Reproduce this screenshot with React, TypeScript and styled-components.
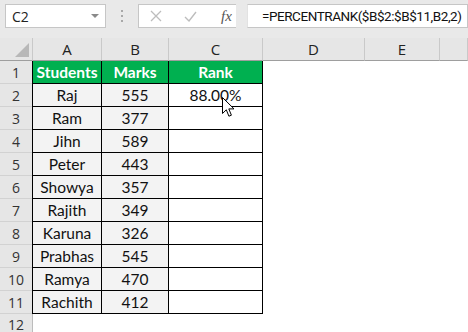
import React from "react";
import styled, { createGlobalStyle } from "styled-components";

const Global = createGlobalStyle`
  html, body { margin: 0; padding: 0; background: #ffffff; }
  body { width: 468px; height: 332px; overflow: hidden; }
`;

const Page = styled.div`
  position: relative;
  width: 468px;
  height: 332px;
  overflow: hidden;
  background: #ffffff;
  font-family: "Open Sans", "Noto Sans", sans-serif;
`;

const Toolbar = styled.div`
  height: 38px;
  box-sizing: border-box;
  background: #e9e9e9;
  display: flex;
  align-items: flex-start;
  padding: 4px 0 0 5px;
`;

const NameBox = styled.div`
  width: 101px;
  height: 24px;
  box-sizing: border-box;
  background: #fff;
  border: 1px solid #c6c6c6;
  display: flex;
  align-items: center;
  justify-content: space-between;
  padding: 0 6px 0 6px;
  font-size: 14px;
  color: #222;
`;

const DropArrow = styled.span`
  width: 0;
  height: 0;
  border-left: 4px solid transparent;
  border-right: 4px solid transparent;
  border-top: 4px solid #8a8a8a;
`;

const Dots = styled.div`
  width: 32px;
  height: 24px;
  display: flex;
  flex-direction: column;
  align-items: center;
  justify-content: center;
  gap: 3px;
`;

const Dot = styled.span`
  width: 2px;
  height: 2px;
  background: #a8a8a8;
`;

const ButtonBox = styled.div`
  width: 98px;
  height: 24px;
  box-sizing: border-box;
  background: #fff;
  border: 1px solid #c6c6c6;
  border-right: none;
  display: flex;
  align-items: center;
  padding-left: 11px;
  gap: 22px;
`;

const Fx = styled.span`
  font-family: "Liberation Serif", serif;
  font-style: italic;
  font-size: 15px;
  color: #555;
  margin-left: 2px;
`;

const FormulaInput = styled.div`
  flex: 1;
  height: 24px;
  box-sizing: border-box;
  background: #fff;
  border: 1px solid #c6c6c6;
  border-left: 1px solid #e2e2e2;
  margin-left: 11px;
  display: flex;
  align-items: center;
  padding-left: 14px;
  font-family: "Roboto", "Open Sans", sans-serif;
  font-size: 13.5px;
  letter-spacing: -0.45px;
  color: #111;
  white-space: nowrap;
  overflow: hidden;
`;

const Sheet = styled.div`
  display: grid;
  grid-template-columns: 33px 69px 67px 94px 102px 75px 1fr;
  grid-template-rows: repeat(12, 23px) 18px;
`;

const ColHead = styled.div`
  background: #e6e6e6;
  border-right: 1px solid #c9c9c9;
  border-bottom: 1px solid #9e9e9e;
  box-sizing: border-box;
  display: flex;
  align-items: center;
  justify-content: center;
  font-size: 15px;
  color: #222;
`;

const Corner = styled(ColHead)`
  justify-content: flex-end;
  align-items: flex-end;
  padding: 0 3px 3px 0;
`;

const RowNum = styled.div<{ $last?: boolean }>`
  background: #e6e6e6;
  border-right: 1px solid #bcbcbc;
  border-bottom: ${(p) => (p.$last ? "none" : "1px solid #d2d2d2")};
  box-sizing: border-box;
  display: flex;
  align-items: center;
  padding-top: ${(p) => (p.$last ? "2px" : "0")};
  justify-content: center;
  font-size: 14px;
  color: #333;
`;

const Cell = styled.div<{ $head?: boolean; $shade?: boolean; $first?: boolean }>`
  box-sizing: border-box;
  display: flex;
  align-items: center;
  justify-content: center;
  font-family: "Lato", "Open Sans", sans-serif;
  font-size: 15.5px;
  font-weight: ${(p) => (p.$head ? 700 : 400)};
  color: ${(p) => (p.$head ? "#ffffff" : "#111")};
  background: ${(p) => (p.$head ? "#00b050" : p.$shade ? "#f3f3f3" : "#ffffff")};
  border-right: 1px solid #000;
  border-bottom: 1px solid #000;
  border-left: ${(p) => (p.$first ? "1px solid #000" : "none")};
  margin-left: ${(p) => (p.$first ? "-1px" : "0")};
`;

const Blank = styled.div`
  background: #fff;
`;

const Pointer = styled.svg`
  position: absolute;
  left: 222px;
  top: 97px;
`;

const cols = ["A", "B", "C", "D", "E", ""];

const data: [string, string, string][] = [
  ["Raj", "555", "88.00%"],
  ["Ram", "377", ""],
  ["Jihn", "589", ""],
  ["Peter", "443", ""],
  ["Showya", "357", ""],
  ["Rajith", "349", ""],
  ["Karuna", "326", ""],
  ["Prabhas", "545", ""],
  ["Ramya", "470", ""],
  ["Rachith", "412", ""],
];

export default function App() {
  return (
    <Page>
      <Global />
      <Toolbar>
        <NameBox>
          <span>C2</span>
          <DropArrow />
        </NameBox>
        <Dots>
          <Dot />
          <Dot />
          <Dot />
        </Dots>
        <ButtonBox>
          <svg width="12" height="12" viewBox="0 0 12 12">
            <path d="M1 1 L11 11 M11 1 L1 11" stroke="#bdbdbd" strokeWidth="1.3" fill="none" />
          </svg>
          <svg width="13" height="11" viewBox="0 0 13 11">
            <path d="M1 6 L5 10 L12 1" stroke="#bdbdbd" strokeWidth="1.4" fill="none" />
          </svg>
          <Fx>fx</Fx>
        </ButtonBox>
        <FormulaInput>=PERCENTRANK($B$2:$B$11,B2,2)</FormulaInput>
      </Toolbar>
      <Sheet>
        <Corner>
          <svg width="14" height="14" viewBox="0 0 14 14">
            <path d="M14 0 L14 14 L0 14 Z" fill="#b8b8b8" />
          </svg>
        </Corner>
        {cols.map((c, i) => (
          <ColHead key={i}>{c}</ColHead>
        ))}
        <RowNum>1</RowNum>
        <Cell $head $first>Students</Cell>
        <Cell $head>Marks</Cell>
        <Cell $head>Rank</Cell>
        <Blank />
        <Blank />
        <Blank />
        {data.map((r, i) => (
          <React.Fragment key={i}>
            <RowNum>{i + 2}</RowNum>
            <Cell $shade $first>{r[0]}</Cell>
            <Cell $shade>{r[1]}</Cell>
            <Cell>{r[2]}</Cell>
            <Blank />
            <Blank />
            <Blank />
          </React.Fragment>
        ))}
        <RowNum $last>12</RowNum>
        <Blank />
        <Blank />
        <Blank />
        <Blank />
        <Blank />
        <Blank />
      </Sheet>
      <Pointer width="13" height="21" viewBox="0 0 13 21">
        <path
          d="M0.5 0.5 L0.5 16.5 L4.3 12.8 L6.9 19.2 L9.4 18.2 L6.8 11.9 L12 11.9 Z"
          fill="#ffffff"
          stroke="#000000"
          strokeWidth="1"
          strokeLinejoin="round"
        />
      </Pointer>
    </Page>
  );
}
